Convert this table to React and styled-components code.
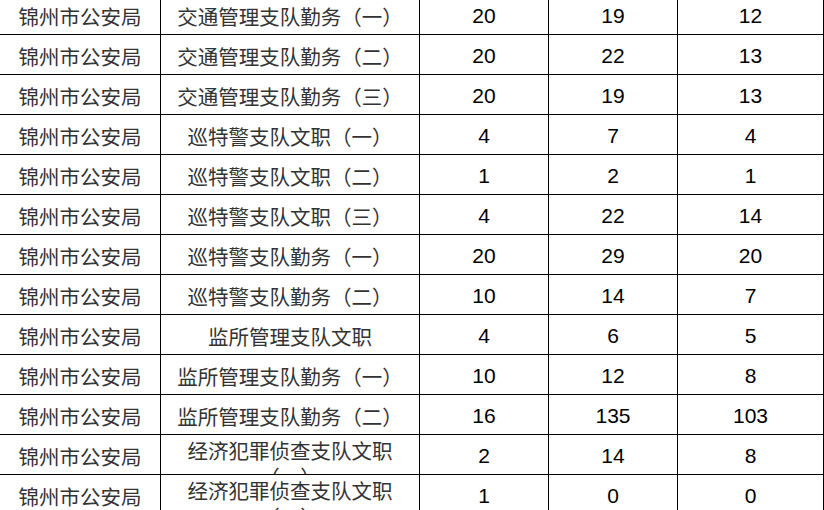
import React from 'react';
import styled, { createGlobalStyle } from 'styled-components';

const GlobalStyle = createGlobalStyle`
  html, body {
    margin: 0;
    padding: 0;
    background: #fff;
    overflow: hidden;
  }
`;

const rows = [
  ['交通管理支队勤务（一）', 20, 19, 12],
  ['交通管理支队勤务（二）', 20, 22, 13],
  ['交通管理支队勤务（三）', 20, 19, 13],
  ['巡特警支队文职（一）', 4, 7, 4],
  ['巡特警支队文职（二）', 1, 2, 1],
  ['巡特警支队文职（三）', 4, 22, 14],
  ['巡特警支队勤务（一）', 20, 29, 20],
  ['巡特警支队勤务（二）', 10, 14, 7],
  ['监所管理支队文职', 4, 6, 5],
  ['监所管理支队勤务（一）', 10, 12, 8],
  ['监所管理支队勤务（二）', 16, 135, 103],
  ['经济犯罪侦查支队文职（一）', 2, 14, 8],
  ['经济犯罪侦查支队文职（二）', 1, 0, 0],
];

const Table = styled.div`
  width: 824px;
  margin-top: -5px;
  display: flex;
  flex-direction: column;
`;

const Row = styled.div`
  display: grid;
  grid-template-columns: 161px 259px 129px 129px 146px;
  height: 40px;
  background: #fff;
`;

const Cell = styled.div`
  box-sizing: border-box;
  height: 40px;
  border-right: 1px solid #000;
  border-bottom: 1px solid #000;
  overflow: hidden;
  display: flex;
  justify-content: center;
  align-items: ${(p) => (p.$wrap ? 'flex-start' : 'center')};
  padding: ${(p) => (p.$wrap ? '2px 4px 0' : '3px 4px 0')};
  text-align: center;
  line-height: ${(p) => (p.$wrap ? '26px' : '24px')};
  font-family: ${(p) =>
    p.$num
      ? '"Liberation Sans", Arial, sans-serif'
      : '"Noto Sans CJK SC", "Noto Sans", sans-serif'};
  font-size: ${(p) => (p.$num ? '21px' : '20.5px')};
  color: ${(p) => (p.$num ? '#000' : '#333')};
`;

export default function App() {
  return (
    <>
      <GlobalStyle />
      <Table>
        {rows.map(([post, a, b, c]) => (
          <Row key={post}>
            <Cell>锦州市公安局</Cell>
            <Cell $wrap={post.length > 11}>{post}</Cell>
            <Cell $num>{a}</Cell>
            <Cell $num>{b}</Cell>
            <Cell $num>{c}</Cell>
          </Row>
        ))}
      </Table>
    </>
  );
}
